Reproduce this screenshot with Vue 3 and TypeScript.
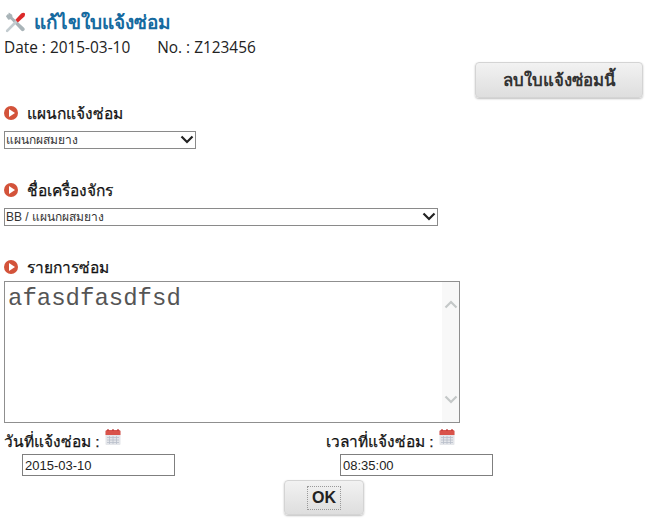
<script setup lang="ts">
const departments = ['แผนกผสมยาง'];
const machines = ['BB / แผนกผสมยาง'];
</script>
<template>
  <div class="page">
    <h1 class="title">
      <svg class="toolIcon" width="21" height="21" viewBox="0 0 22 22">
        <path d="M4 2 L2 4.5 L4.5 8 L7 7.5 L18 19.5 a1.8 1.8 0 0 0 3 -3 L9 5.5 L8.5 3 L5 0.5 L4.5 3 Z" fill="#a9b4b8" />
        <path d="M2 19 L12.5 8.5 L14.5 10.5 L4 21 Q1.5 21.5 2 19 Z" fill="#c3ccd0" />
        <path d="M12 8 L18 1.5 Q20.5 0 22 1.5 Q22.5 3.5 20.5 5.5 L14.5 11 Z" fill="#dc2a2a" />
      </svg>
      <span>แก้ไขใบแจ้งซ่อม</span>
    </h1>
    <div class="meta"><span>Date : 2015-03-10</span><span>No. : Z123456</span></div>
    <div class="actions"><button class="btn del" type="button">ลบใบแจ้งซ่อมนี้</button></div>

    <div class="label first"><span class="bullet"><i></i></span>แผนกแจ้งซ่อม</div>
    <div class="selectWrap short">
      <select><option v-for="d in departments" :key="d">{{ d }}</option></select>
      <svg width="14" height="9" viewBox="0 0 14 9"><path d="M1.5 1.5 L7 7 L12.5 1.5" fill="none" stroke="#222" stroke-width="2.2" /></svg>
    </div>

    <div class="label second"><span class="bullet"><i></i></span>ชื่อเครื่องจักร</div>
    <div class="selectWrap long">
      <select><option v-for="m in machines" :key="m">{{ m }}</option></select>
      <svg width="14" height="9" viewBox="0 0 14 9"><path d="M1.5 1.5 L7 7 L12.5 1.5" fill="none" stroke="#222" stroke-width="2.2" /></svg>
    </div>

    <div class="label third"><span class="bullet"><i></i></span>รายการซ่อม</div>
    <div class="areaWrap">
      <textarea spellcheck="false">afasdfasdfsd</textarea>
      <div class="scroll">
        <svg width="14" height="9" viewBox="0 0 14 9"><path d="M1.5 7.5 L7 2 L12.5 7.5" fill="none" stroke="#c4c8c8" stroke-width="2.2" /></svg>
        <svg width="14" height="9" viewBox="0 0 14 9"><path d="M1.5 1.5 L7 7 L12.5 1.5" fill="none" stroke="#c4c8c8" stroke-width="2.2" /></svg>
      </div>
    </div>

    <div class="dates">
      <div class="dateCol">
        <div class="dateLabel">วันที่แจ้งซ่อม :
          <svg class="cal" width="16" height="17" viewBox="0 0 16 17">
            <rect x="0.5" y="2" width="15" height="15" rx="1" fill="#e4e6ea" />
            <path d="M0.5 7 V3.5 Q0.5 2 2 2 H14 Q15.5 2 15.5 3.5 V7 Z" fill="#d9534a" />
            <path d="M3 1 V3 M8 1 V3 M13 1 V3" stroke="#b33" stroke-width="1.2" />
            <path d="M2 9.5 H14 M2 12 H14 M2 14.5 H14 M4.5 8 V16 M8 8 V16 M11.5 8 V16" stroke="#b9bfca" stroke-width="0.8" />
          </svg>
        </div>
        <input class="dateInput" value="2015-03-10" />
      </div>
      <div class="dateCol timeCol">
        <div class="dateLabel">เวลาที่แจ้งซ่อม :
          <svg class="cal" width="16" height="17" viewBox="0 0 16 17">
            <rect x="0.5" y="2" width="15" height="15" rx="1" fill="#e4e6ea" />
            <path d="M0.5 7 V3.5 Q0.5 2 2 2 H14 Q15.5 2 15.5 3.5 V7 Z" fill="#d9534a" />
            <path d="M3 1 V3 M8 1 V3 M13 1 V3" stroke="#b33" stroke-width="1.2" />
            <path d="M2 9.5 H14 M2 12 H14 M2 14.5 H14 M4.5 8 V16 M8 8 V16 M11.5 8 V16" stroke="#b9bfca" stroke-width="0.8" />
          </svg>
        </div>
        <input class="dateInput" value="08:35:00" />
      </div>
    </div>

    <div class="submit"><button class="btn ok" type="button"><span>OK</span></button></div>
  </div>
</template>
<style>
html,
body {
  margin: 0;
  background: #fff;
}
</style>
<style scoped>
.page {
  width: 652px;
  height: 522px;
  padding: 10px 0 0 4px;
  box-sizing: border-box;
  overflow: hidden;
  font-family: "Open Sans", "Noto Sans", "Liberation Sans", sans-serif;
  color: #222;
}
.title {
  display: flex;
  align-items: center;
  gap: 9px;
  margin: 0;
  height: 24px;
  font-size: 19px;
  font-weight: 700;
  color: #156a9f;
}
.meta {
  display: flex;
  gap: 27px;
  margin-top: 4px;
  height: 20px;
  line-height: 20px;
  font-size: 15.4px;
}
.actions {
  display: flex;
  justify-content: flex-end;
  width: 639px;
  margin-top: 4px;
}
.btn {
  border: 1px solid #d4d4d4;
  border-radius: 4px;
  background: linear-gradient(#f2f2f2, #dedede);
  box-shadow: 0 1px 2px rgba(0, 0, 0, 0.25);
  font-family: "Liberation Sans", sans-serif;
  font-weight: 700;
  color: #333;
  padding: 0;
}
.del {
  width: 168px;
  height: 36px;
  font-size: 16.8px;
}
.label {
  display: flex;
  align-items: center;
  gap: 9px;
  height: 20px;
  font-size: 15.5px;
  color: #111;
  -webkit-text-stroke: 0.25px #111;
}
.first {
  margin-top: 5px;
}
.second {
  margin-top: 31px;
}
.third {
  margin-top: 31px;
}
.bullet {
  display: flex;
  align-items: center;
  justify-content: center;
  width: 14px;
  height: 14px;
  border-radius: 50%;
  background: #d3533a;
}
.bullet i {
  width: 0;
  height: 0;
  margin-left: 2px;
  border-left: 6px solid #fff;
  border-top: 4px solid transparent;
  border-bottom: 4px solid transparent;
}
.selectWrap {
  position: relative;
  height: 18px;
  margin-top: 8px;
}
.selectWrap select {
  appearance: none;
  display: block;
  width: 100%;
  height: 18px;
  border: 1px solid #8a8a8a;
  border-radius: 0;
  background: #fff;
  padding: 0 0 0 1px;
  font-family: "Liberation Sans", sans-serif;
  font-size: 12px;
  color: #333;
  box-sizing: border-box;
}
.selectWrap svg {
  position: absolute;
  right: 2px;
  top: 4px;
}
.short {
  width: 192px;
}
.long {
  width: 434px;
}
.areaWrap {
  position: relative;
  width: 456px;
  height: 142px;
  margin-top: 4px;
}
.areaWrap textarea {
  display: block;
  width: 100%;
  height: 100%;
  box-sizing: border-box;
  border: 1px solid #8f8f8f;
  border-radius: 0;
  padding: 3px 3px;
  resize: none;
  overflow: hidden;
  outline: none;
  font-family: "Liberation Mono", monospace;
  font-size: 24px;
  color: #555;
}
.scroll {
  position: absolute;
  top: 1px;
  right: 1px;
  bottom: 1px;
  width: 17px;
  background: #f8f8f8;
  display: flex;
  flex-direction: column;
  justify-content: space-between;
  align-items: center;
  padding: 18px 0;
  box-sizing: border-box;
}
.dates {
  display: flex;
}
.dateCol {
  display: flex;
  flex-direction: column;
  width: 322px;
}
.timeCol {
  width: 200px;
}
.dateLabel {
  height: 31px;
  display: flex;
  align-items: flex-end;
  gap: 5px;
  font-family: "Liberation Sans", sans-serif;
  font-size: 15.5px;
  color: #111;
  -webkit-text-stroke: 0.25px #111;
  box-sizing: border-box;
}
.cal {
  align-self: flex-start;
  margin-top: 5px;
}
.dateInput {
  width: 153px;
  height: 22px;
  margin: 0 0 0 18px;
  box-sizing: border-box;
  border: 1px solid #7f7f7f;
  border-radius: 0;
  padding: 1px 2px;
  font-family: "Liberation Sans", sans-serif;
  font-size: 13px;
  color: #222;
}
.timeCol .dateInput {
  margin-left: 14px;
}
.submit {
  display: flex;
  justify-content: center;
  width: 640px;
  margin-top: 4px;
}
.ok {
  width: 80px;
  height: 35px;
  font-size: 16px;
  color: #222;
}
.ok span {
  display: inline-block;
  padding: 2px 4px;
  border: 1px dotted #999;
}
</style>
